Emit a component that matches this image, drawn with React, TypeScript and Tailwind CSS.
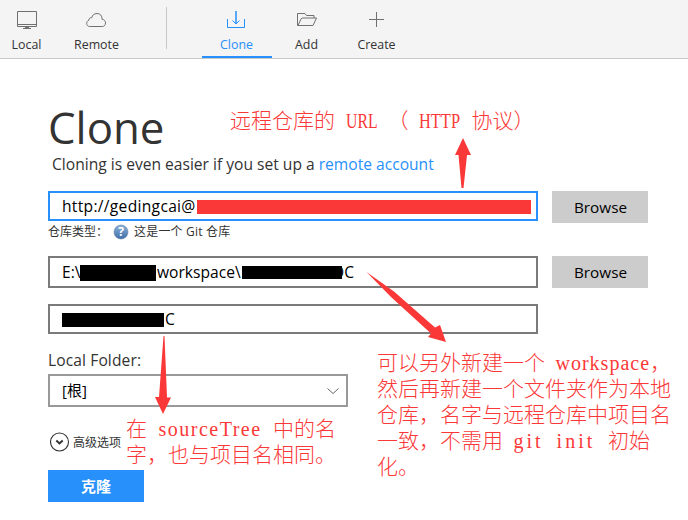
import React from "react";

function Tab({ label, active, children }: { label: string; active?: boolean; children: React.ReactNode }) {
  return (
    <div
      className={
        "flex h-[58px] w-[70px] shrink-0 flex-col items-center border-b-2 pt-[8px] " +
        (active ? "border-[#2790fb] text-[#2790fb]" : "border-transparent text-[#707070]")
      }
    >
      <svg width="24" height="24" viewBox="0 0 24 24" fill="none" stroke="currentColor" strokeWidth="1">
        {children}
      </svg>
      <span className={"mt-[4px] whitespace-nowrap pr-px text-[12.4px] leading-[18px] " + (active ? "" : "text-[#333]")}>{label}</span>
    </div>
  );
}

/* A Latin word inside a note; the class sets its advance, tracking and squeeze. */
function Latin({ text, box, glyphs }: { text: string; box: string; glyphs: string }) {
  return (
    <span className={"inline-block shrink-0 " + box}>
      <span className={"inline-block origin-left whitespace-pre font-['Liberation_Serif',serif] text-[20px] " + glyphs}>
        {text}
      </span>
    </span>
  );
}

function Note({ className, children }: { className: string; children: React.ReactNode }) {
  return (
    <div
      className={
        "absolute whitespace-nowrap font-['Noto_Sans_CJK_SC',sans-serif] text-[21px] font-light leading-[26px] text-[#fb3838] " +
        className
      }
    >
      {children}
    </div>
  );
}

function Line({ children }: { children: React.ReactNode }) {
  return <div className="flex h-[26px] items-baseline">{children}</div>;
}

function Browse() {
  return (
    <button className="ml-[14px] h-[32px] w-[96px] bg-[#ccc] pl-px text-[15.3px] leading-[32px] text-black">Browse</button>
  );
}

export default function App() {
  return (
    <div className="relative h-[520px] w-[688px] overflow-hidden bg-white font-['Open_Sans','Noto_Sans_CJK_SC',sans-serif] text-[#333]">
      <header className="flex h-[59px] border-b border-[#c8c8c8] bg-[#f4f4f4]">
        <div className="-ml-[8px] flex">
          <Tab label="Local">
            <path d="M2.500 3.500h19v15h-19zM3 16.500h18M8 20.500h8M10 19.500h4" />
          </Tab>
          <Tab label="Remote">
            <path d="M5.500 18.500h12.800c2 0 3.200-1.500 3.200-3.500 0-2.200-1.500-3.600-3.400-3.700.1-3.600-2-5.800-5.100-5.800-3 0-4.700 1.700-5.200 4.200-1.800-.2-3 .7-3 2.600-1.400.6-2.100 1.600-2.100 2.900 0 1.900 1.100 3.300 2.800 3.300z" transform="translate(-1 0)" />
          </Tab>
        </div>
        <div className="ml-[34px] mt-[7px] h-[42px] w-px bg-[#c8c8c8]" />
        <div className="ml-[35px] flex">
          <Tab label="Clone" active>
            <path d="M2.500 11v8.500h17V11M7.500 12.500l3.500 3.500 3.500-3.500" />
            <path d="M11 3v12.500" strokeWidth="1.500" />
          </Tab>
          <Tab label="Add">
            <path d="M2.500 17.500V5.500h7.500l1.500 2h7.500v2.500M2.500 17.500h15.500l3.500-7.500h-14.500l-1 1-3 6.500" />
          </Tab>
          <Tab label="Create">
            <path d="M11.500 4v15M4 11.500h15" />
          </Tab>
        </div>
      </header>

      <main className="flex flex-col pl-[48px]">
        <h1 className="mt-[38px] h-[57px] whitespace-nowrap text-[43.8px] leading-[60px]">Clone</h1>
        <p className="ml-[4px] h-[20px] whitespace-nowrap text-[15.6px] leading-[20px]">
          Cloning is even easier if you set up a <a className="text-[#2790fb]">remote account</a>
        </p>

        <div className="mt-[17px] flex h-[32px] items-start">
          <div className="flex h-[30px] w-[490px] items-center border-2 border-[#2790fb] pl-[12px] text-[15.6px] text-black">
            <span className="w-[135px] shrink-0 whitespace-nowrap pt-[2px] tracking-[.3px]">http://gedingcai@</span>
            <span className="mt-px h-[14px] w-[334px] bg-[#fb3838]" />
          </div>
          <Browse />
        </div>
        <div className="flex h-[18px] items-center whitespace-nowrap text-[12px] leading-[18px]">
          <span className="w-[65px]">仓库类型：</span>
          <svg width="16" height="16" viewBox="0 0 16 16">
            <defs>
              <linearGradient id="ball" x1="0" y1="0" x2="0" y2="1">
                <stop offset="0" stopColor="#8fb4d8" />
                <stop offset="1" stopColor="#3d6ca8" />
              </linearGradient>
            </defs>
            <circle cx="8" cy="8" r="7" fill="url(#ball)" stroke="#6085ad" strokeWidth=".6" />
            <text x="8" y="12.300" textAnchor="middle" fontSize="12" fontWeight="700" fill="#fff" fontFamily="Open Sans">?</text>
          </svg>
          <span className="ml-[5px] tracking-[.2px]">这是一个 Git 仓库</span>
        </div>

        <div className="mt-[15px] flex h-[32px]">
          <div className="flex h-[32px] w-[490px] items-center border-2 border-[#7a7a7a] pl-[12px] text-[15.6px] text-black">
            <span className="w-[18px] shrink-0 pt-px">E:\</span>
            <span className="mt-[2px] h-[16px] w-[76px] shrink-0 bg-black" />
            <span className="w-[86px] shrink-0 whitespace-nowrap pl-px pt-px">workspace\</span>
            <span className="h-[13px] w-[100px] shrink-0 bg-black" />
            <span className="-ml-[10px] flex pt-px"><span className="[clip-path:inset(0_0_0_9px)]">O</span>C</span>
          </div>
          <Browse />
        </div>

        <div className="mt-[16px] flex h-[30px] w-[490px] items-center border-2 border-[#7a7a7a] pl-[12px] text-[15.6px] text-black">
          <span className="mt-[2px] h-[14px] w-[102px] bg-black" />
          <span className="ml-px pt-[2px]">C</span>
        </div>

        <label className="mt-[15px] h-[22px] text-[15.600px] leading-[22px] tracking-[.1px]">Local Folder:</label>
        <div className="mt-[3px] flex h-[33px] w-[300px] items-center justify-between border-2 border-[#999] pl-[12px] pr-[6px] text-[15px] text-black">
          <span>[根]</span>
          <svg width="14" height="8" viewBox="0 0 14 8" fill="none" stroke="#666">
            <path d="M1.500 1.500l5.500 5 5.500-5" />
          </svg>
        </div>

        <div className="mt-[25px] flex h-[20px] items-center pl-[2px] text-[12px]">
          <svg width="20" height="20" viewBox="0 0 20 20" fill="none" stroke="#333">
            <circle cx="9.500" cy="10" r="9" strokeWidth="1.100" />
            <path d="M6.300 8.500l3.200 3 3.200-3" strokeWidth="2" />
          </svg>
          <span className="ml-[3px] pt-[2px]">高级选项</span>
        </div>
        <button className="mt-[18px] h-[32px] w-[96px] bg-[#2790fb] text-[15px] font-bold leading-[32px] text-white">克隆</button>
      </main>

      <svg className="absolute left-0 top-0" width="688" height="520" fill="#fb3838">
        <path d="M463 138L471 155H467L463.500 188H461.500L458.500 155H455Z" />
        <path d="M366.500 272L394 291.500 435 327.500 440 325 446 342 428 337 431 333.500 391 297Z" />
        <path d="M163.500 336H164.500L167 397.500H171L163 414 155 397H159Z" />
      </svg>

      <Note className="left-[230px] top-[106px]">
        <Line>
          远程仓库的
          <Latin text="URL" box="ml-[10.5px] w-[42px]" glyphs="scale-x-[.79]" />
          （
          <Latin text="HTTP" box="ml-[10.5px] w-[52.5px]" glyphs="scale-x-[.82]" />
          协议）
        </Line>
      </Note>
      <Note className="left-[377px] top-[348px]">
        <Line>
          可以另外新建一个
          <Latin text="workspace" box="ml-[10.5px] w-[94.5px]" glyphs="tracking-[1px]" />，
        </Line>
        <Line>然后再新建一个文件夹作为本地</Line>
        <Line>仓库，名字与远程仓库中项目名</Line>
        <Line>
          一致，不需用
          <Latin text="git init" box="ml-[10.5px] w-[94.5px]" glyphs="tracking-[3px] [word-spacing:5px]" />
          初始
        </Line>
        <Line>化。</Line>
      </Note>
      <Note className="left-[126px] top-[414px]">
        <Line>
          在
          <Latin text="sourceTree" box="ml-[11.5px] w-[114.5px]" glyphs="tracking-[1.5px]" />
          中的名
        </Line>
        <Line>字，也与项目名相同。</Line>
      </Note>
    </div>
  );
}
